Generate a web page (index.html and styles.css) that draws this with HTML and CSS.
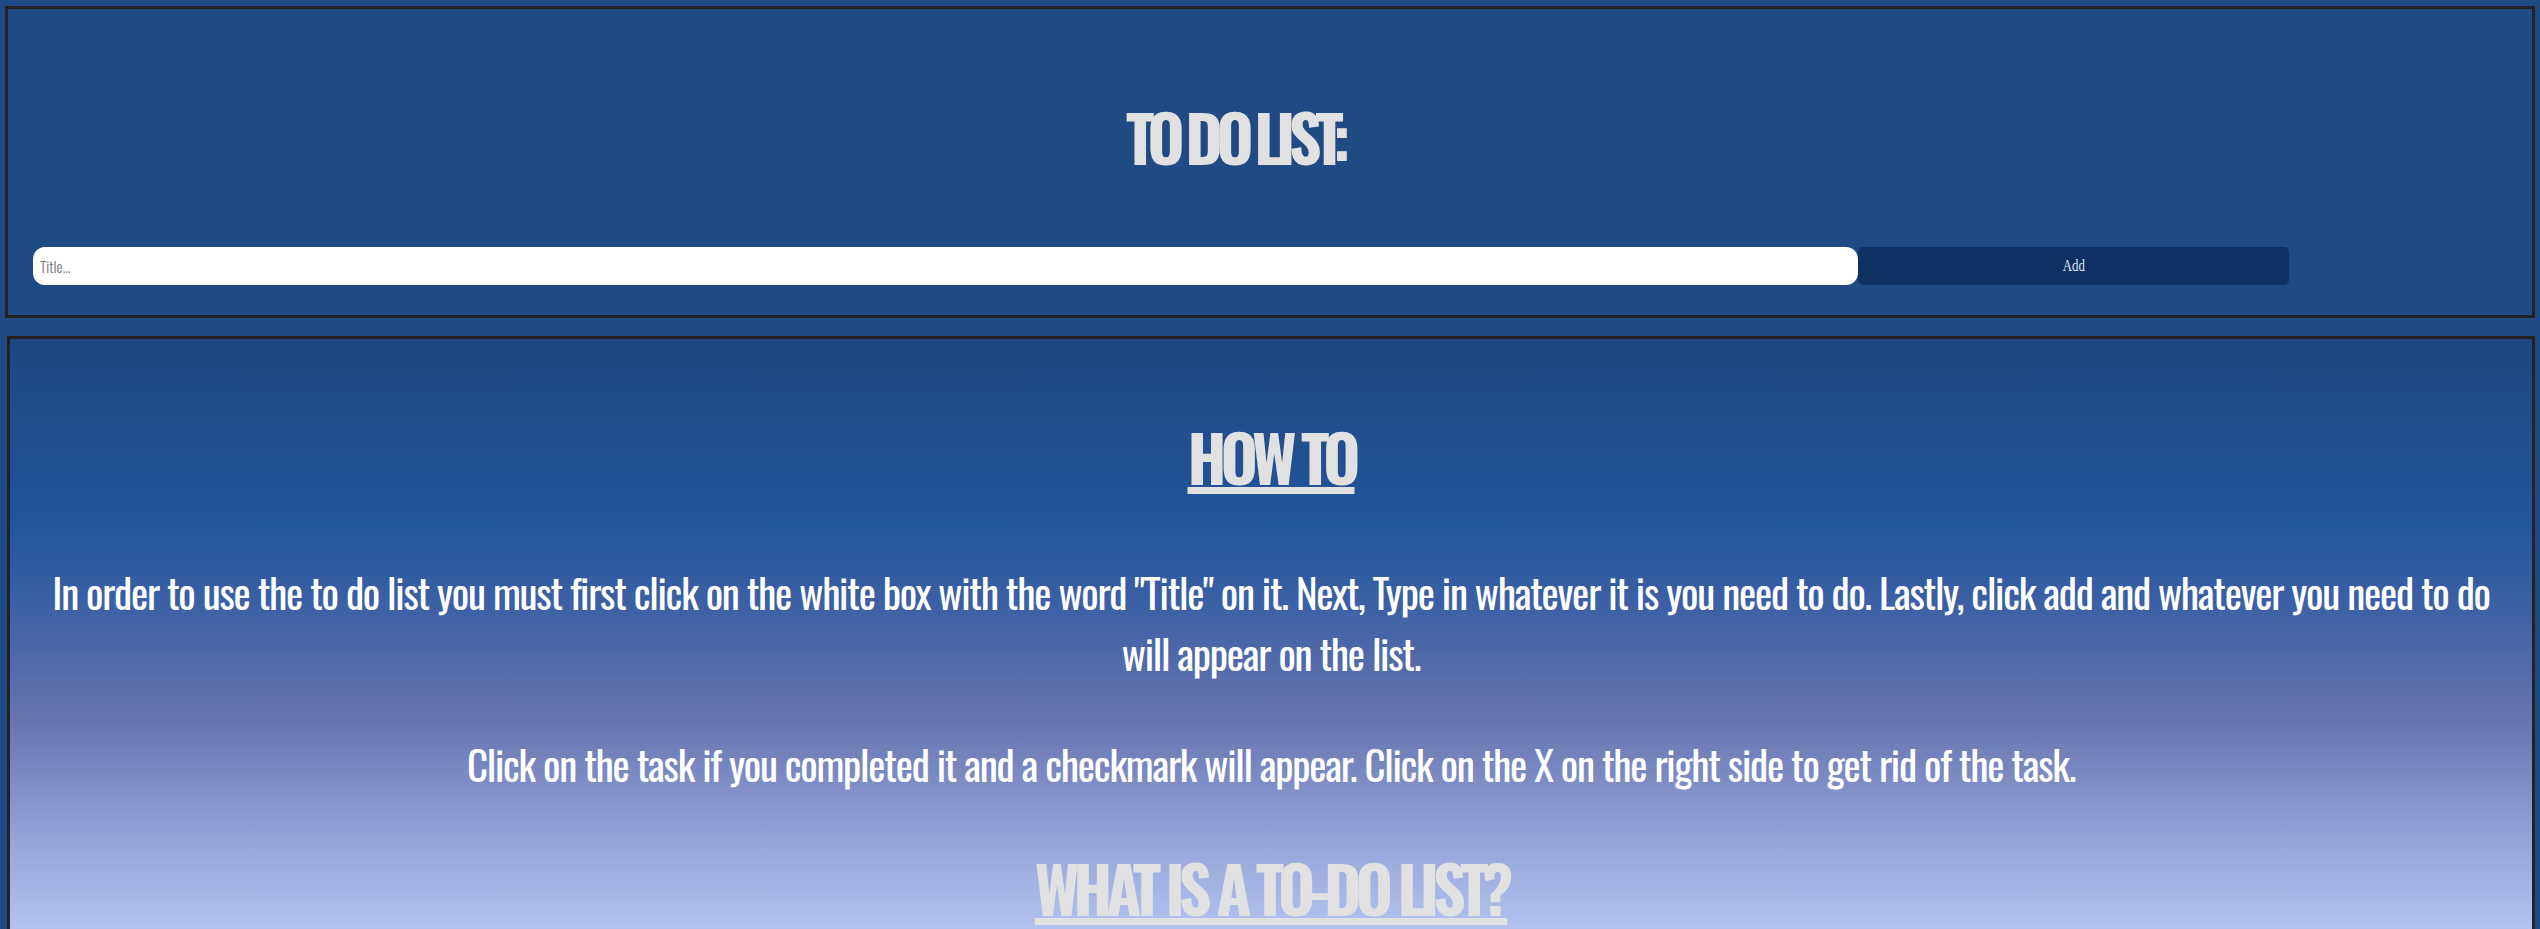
FILE: index.html
```html
<!DOCTYPE html>
<html lang="en">
<head>
<meta charset="utf-8">
<title>To Do List</title>
<link rel="stylesheet" href="styles.css">
</head>
<body>
  <header class="todo-header">
    <h1 class="todo-title">TO DO LIST:</h1>
    <div class="todo-form">
      <input class="todo-input" type="text" placeholder="Title...">
      <button class="todo-add" type="button"><span class="todo-add-label">Add</span></button>
    </div>
  </header>
  <section class="info">
    <h2 class="info-title info-title-first">HOW TO</h2>
    <p class="info-text info-text-first">In order to use the to do list you must first click on the white box with the word "Title" on it. Next, Type in whatever it is you need to do. Lastly, click add and whatever you need to do will appear on the list.</p>
    <p class="info-text info-text-second">Click on the task if you completed it and a checkmark will appear. Click on the X on the right side to get rid of the task.</p>
    <h2 class="info-title info-title-second">WHAT IS A TO-DO LIST?</h2>
    <p class="info-text info-text-second">A to-do list is a list of tasks you need to complete, or things that you want to do.</p>
  </section>
</body>
</html>
```
FILE: styles.css
```css
html, body {
  background: #1f4a84;
}
body {
  margin: 6px 5px 0 5px;
  font-family: "Oswald", "Open Sans", sans-serif;
}
.todo-header {
  border: 3px solid #222;
  height: 306px;
  display: flex;
  flex-direction: column;
}
.todo-title {
  margin: 80px 0 0 0;
  padding-right: 70px;
  font-size: 64px;
  line-height: 95px;
  font-weight: 700;
  letter-spacing: -6.5px;
  word-spacing: -3px;
  color: #e1e1e1;
  text-align: center;
}
.todo-form {
  display: flex;
  margin: 63px 0 0 25px;
}
.todo-input {
  width: 1825px;
  height: 38px;
  box-sizing: border-box;
  border: none;
  border-radius: 12px;
  padding: 0 7px;
  margin: 0;
  background: #fff;
  font-family: "Oswald", "Liberation Sans", sans-serif;
  font-weight: 300;
  font-size: 15px;
  color: #333;
  outline: none;
}
.todo-input::placeholder {
  color: #767676;
}
.todo-add {
  width: 431px;
  height: 38px;
  margin: 0;
  padding: 0;
  border: none;
  border-radius: 5px;
  background: #0f3163;
  color: #dde3ea;
  font-family: "Liberation Serif", "Times New Roman", serif;
  font-size: 16px;
}
.todo-add-label {
  display: inline-block;
  transform: scaleX(0.8);
}
.info {
  margin: 18px 0 0 2px;
  border: 3px solid #222;
  padding: 0 40px 60px;
  text-align: center;
  background: linear-gradient(to bottom,
    #1e4781 0px,
    #23559b 185px,
    #3a5fa4 260px,
    #6674b0 380px,
    #95a3d7 500px,
    #b4c2f0 590px,
    #c9d3f6 800px);
}
.info-title {
  font-size: 64px;
  line-height: 95px;
  font-weight: 700;
  letter-spacing: -6px;
  color: #e1e1e1;
  text-decoration: underline;
  text-decoration-thickness: 7px;
  text-underline-offset: 2px;
  margin: 0;
}
.info-title-first {
  margin-top: 70px;
}
.info-title-second {
  margin-top: 46px;
}
.info-text {
  font-size: 41px;
  line-height: 61px;
  font-weight: 400;
  letter-spacing: -1.25px;
  color: #fff;
  margin: 0;
}
.info-text-first {
  margin-top: 57px;
}
.info-text-second {
  margin-top: 50px;
}
```
